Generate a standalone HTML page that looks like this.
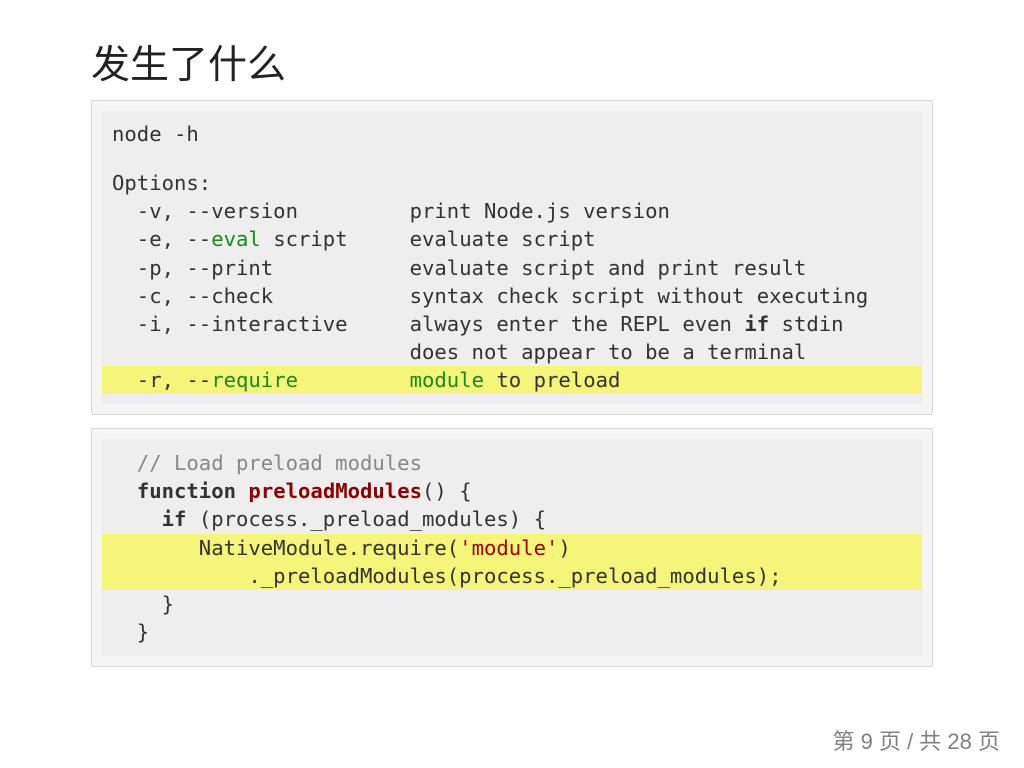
<!DOCTYPE html>
<html><head><meta charset="utf-8"><style>
body{margin:0;width:1024px;height:768px;background:#fff;position:relative;overflow:hidden;font-family:"Liberation Sans","Noto Sans CJK SC",sans-serif}
h1{position:absolute;left:91px;top:38px;margin:0;font-size:39px;font-weight:normal;color:#222;line-height:56px}
.box{position:absolute;left:91px;width:840px;border:1px solid #d8d8d8;border-radius:2px;background:#f5f5f5}
.in{position:absolute;left:10px;right:10px;top:10px;bottom:10px;background:#eeeeee}
pre{margin:0;position:absolute;left:10px;font-family:"DejaVu Sans Mono",monospace;font-size:20.6px;line-height:28.2px;color:#333;white-space:pre}
.hl{position:absolute;left:0;right:0;background:#f5f57a}
.g{color:#1a8a1a}.c{color:#888}.k{font-weight:bold}.f{font-weight:bold;color:#8b0000}.s{color:#a00000}
.ft{position:absolute;right:24px;top:724px;font-size:22px;color:#808080}
</style></head><body>
<h1>发生了什么</h1>
<div class="box" style="top:100px;height:313px"><div class="in">
<div class="hl" style="top:255px;height:28px"></div>
<pre style="top:9px">node -h</pre>
<pre style="top:58px">Options:
  -v, --version         print Node.js version
  -e, --<span class="g">eval</span> script     evaluate script
  -p, --print           evaluate script and print result
  -c, --check           syntax check script without executing
  -i, --interactive     always enter the REPL even <span class="k">if</span> stdin
                        does not appear to be a terminal
  -r, --<span class="g">require</span>         <span class="g">module</span> to preload</pre>
</div></div>
<div class="box" style="top:428px;height:237px"><div class="in">
<div class="hl" style="top:95px;height:56px"></div>
<pre style="top:10px"><span class="c">  // Load preload modules</span>
  <span class="k">function</span> <span class="f">preloadModules</span>() {
    <span class="k">if</span> (process._preload_modules) {
       NativeModule.require(<span class="s">'module'</span>)
           ._preloadModules(process._preload_modules);
    }
  }</pre>
</div></div>
<div class="ft">第 9 页 / 共 28 页</div>
</body></html>
